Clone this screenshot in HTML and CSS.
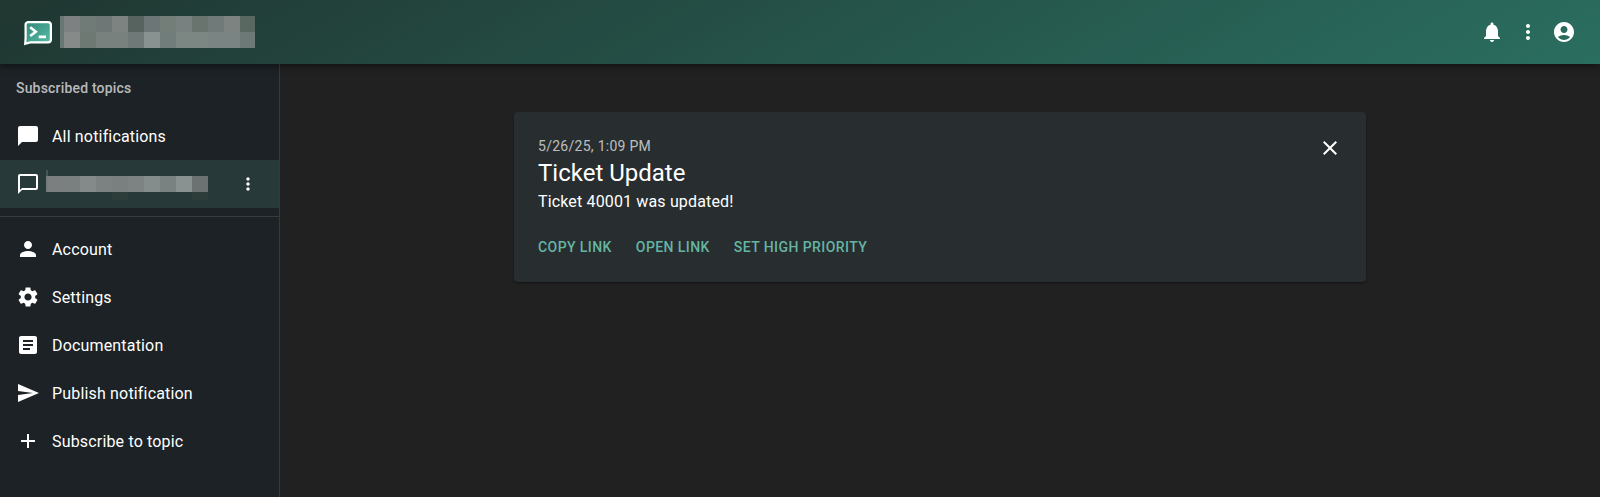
FILE: index.html
```html
<!DOCTYPE html>
<html lang="en">
<head>
<meta charset="utf-8">
<title>ntfy</title>
<link rel="stylesheet" href="styles.css">
</head>
<body>
<header class="topbar">
  <svg class="logo" viewBox="0 0 28 28">
    <defs><linearGradient id="g" x1="0" y1="0" x2="1" y2="1"><stop offset="0" stop-color="#348878"/><stop offset="1" stop-color="#56bda8"/></linearGradient></defs>
    <path d="M4 3.100h20a2.900 2.900 0 0 1 2.900 2.900v14.500a2.900 2.900 0 0 1-2.900 2.900H6.200L1.200 24.800 1.600 19V6A2.600 2.600 0 0 1 4 3.100z" fill="url(#g)" stroke="#fff" stroke-width="2.200"/>
    <path d="M6.200 8.300l5.600 4.400-5.600 4.400M14.700 17.900h7.300" fill="none" stroke="#fff" stroke-width="2.600"/>
  </svg>
  <svg class="redacted-title" viewBox="0 0 195 32" shape-rendering="crispEdges">
    <path fill="#697773" d="M0 0h4v32H0z"/>
    <path fill="#7d8181" d="M4 0h16v16H4z"/><path fill="#707b77" d="M20 0h16v16H20z"/><path fill="#6e7676" d="M36 0h16v16H36z"/><path fill="#7d8380" d="M52 0h16v16H52z"/><path fill="#56635f" d="M68 0h16v16H68z"/><path fill="#6c7676" d="M84 0h16v16H84z"/><path fill="#747e79" d="M100 0h16v16h-16z"/><path fill="#78817f" d="M116 0h16v16h-16z"/><path fill="#69746f" d="M132 0h16v16h-16z"/><path fill="#707b79" d="M148 0h16v16h-16z"/><path fill="#7c8380" d="M164 0h16v16h-16z"/><path fill="#596962" d="M180 0h15v16h-15z"/>
    <path fill="#868b8a" d="M4 16h16v16H4z"/><path fill="#6e7974" d="M20 16h16v16H20z"/><path fill="#78817e" d="M36 16h32v16H36z"/><path fill="#6e7978" d="M84 16H68v16h16z"/><path fill="#889290" d="M84 16h16v16H84z"/><path fill="#717d7b" d="M100 16h16v16h-16z"/><path fill="#7c8683" d="M116 16h32v16h-32z"/><path fill="#7a8482" d="M148 16h32v16h-32z"/><path fill="#6c7976" d="M180 16h15v16h-15z"/>
  </svg>
  <div class="topbar-actions">
    <svg class="icon" viewBox="0 0 24 24"><path d="M12 22c1.100 0 2-.9 2-2h-4c0 1.100.89 2 2 2zm6-6v-5c0-3.070-1.640-5.640-4.500-6.320V4c0-.83-.67-1.500-1.500-1.500s-1.500.67-1.500 1.500v.68C7.630 5.360 6 7.920 6 11v5l-2 2v1h16v-1l-2-2z"/></svg>
    <svg class="icon" viewBox="0 0 24 24"><path d="M12 8c1.100 0 2-.9 2-2s-.9-2-2-2-2 .9-2 2 .9 2 2 2zm0 2c-1.100 0-2 .9-2 2s.9 2 2 2 2-.9 2-2-.9-2-2-2zm0 6c-1.100 0-2 .9-2 2s.9 2 2 2 2-.9 2-2-.9-2-2-2z"/></svg>
    <svg class="icon" viewBox="0 0 24 24"><path d="M12 2C6.480 2 2 6.480 2 12s4.480 10 10 10 10-4.480 10-10S17.520 2 12 2zm0 4c1.930 0 3.500 1.570 3.500 3.500S13.930 13 12 13s-3.500-1.570-3.500-3.500S10.070 6 12 6zm0 14c-2.030 0-4.430-.82-6.140-2.880C7.550 15.800 9.680 15 12 15s4.450.8 6.140 2.120C16.430 19.180 14.030 20 12 20z"/></svg>
  </div>
</header>
<div class="shell">
  <nav class="sidebar">
    <div class="subheader">Subscribed topics</div>
    <a class="item"><svg class="icon" viewBox="0 0 24 24"><path d="M20 2H4c-1.100 0-1.990.9-1.990 2L2 22l4-4h14c1.100 0 2-.9 2-2V4c0-1.100-.9-2-2-2z"/></svg><span class="label">All notifications</span></a>
    <a class="item selected"><svg class="icon" viewBox="0 0 24 24"><path d="M20 2H4c-1.100 0-2 .9-2 2v18l4-4h14c1.100 0 2-.9 2-2V4c0-1.100-.9-2-2-2zm0 14H6l-2 2V4h16v12z"/></svg>
      <svg class="redacted-topic" viewBox="0 0 162 30" shape-rendering="crispEdges">
        <path fill="#465452" d="M0 0h2v6H0z"/><path fill="#737d7b" d="M0 6h2v16H0z"/><path fill="#7b7f7f" d="M2 6h16v16H2z"/><path fill="#7a8080" d="M18 6h16v16H18z"/><path fill="#848a8a" d="M34 6h16v16H34z"/><path fill="#7c8282" d="M50 6h16v16H50z"/><path fill="#7a7f7f" d="M66 6h16v16H66z"/><path fill="#7d8383" d="M82 6h16v16H82z"/><path fill="#858c8c" d="M98 6h16v16H98z"/><path fill="#7a8181" d="M114 6h16v16h-16z"/><path fill="#8a9191" d="M130 6h16v16h-16z"/><path fill="#6c7272" d="M146 6h16v16h-16z"/><path fill="#2d3d3a" d="M66 22h16v8H66zM146 22h16v8h-16z"/>
      </svg>
      <svg class="icon more" viewBox="0 0 24 24"><path d="M12 8c1.100 0 2-.9 2-2s-.9-2-2-2-2 .9-2 2 .9 2 2 2zm0 2c-1.100 0-2 .9-2 2s.9 2 2 2 2-.9 2-2-.9-2-2-2zm0 6c-1.100 0-2 .9-2 2s.9 2 2 2 2-.9 2-2-.9-2-2-2z"/></svg></a>
    <hr class="divider">
    <a class="item"><svg class="icon" viewBox="0 0 24 24"><path d="M12 12c2.210 0 4-1.790 4-4s-1.790-4-4-4-4 1.790-4 4 1.790 4 4 4zm0 2c-2.670 0-8 1.340-8 4v2h16v-2c0-2.660-5.330-4-8-4z"/></svg><span class="label">Account</span></a>
    <a class="item"><svg class="icon" viewBox="0 0 24 24"><path d="M19.140 12.940c.04-.3.060-.61.060-.94 0-.32-.02-.64-.07-.94l2.030-1.580c.18-.14.230-.41.120-.61l-1.920-3.320c-.12-.22-.37-.29-.59-.22l-2.390.96c-.5-.38-1.030-.7-1.620-.94l-.36-2.540c-.04-.24-.24-.41-.48-.41h-3.840c-.24 0-.43.17-.47.41l-.36 2.540c-.59.24-1.130.57-1.620.94l-2.390-.96c-.22-.08-.47 0-.59.22L2.740 8.870c-.12.210-.08.470.12.610l2.030 1.580c-.05.3-.09.630-.09.940s.02.640.07.940l-2.030 1.580c-.18.140-.23.410-.12.610l1.920 3.320c.12.220.37.290.59.220l2.390-.96c.5.380 1.030.7 1.620.94l.36 2.540c.05.240.24.410.48.410h3.840c.24 0 .44-.17.470-.41l.36-2.540c.59-.24 1.130-.56 1.620-.94l2.390.96c.22.080.47 0 .59-.22l1.920-3.320c.12-.22.070-.47-.12-.61l-2.010-1.580zM12 15.600c-1.980 0-3.600-1.620-3.600-3.600s1.620-3.600 3.600-3.600 3.600 1.620 3.600 3.600-1.620 3.600-3.600 3.600z"/></svg><span class="label">Settings</span></a>
    <a class="item"><svg class="icon" viewBox="0 0 24 24"><path d="M19 3H5c-1.100 0-2 .9-2 2v14c0 1.100.9 2 2 2h14c1.100 0 2-.9 2-2V5c0-1.100-.9-2-2-2zm-5 14H7v-2h7v2zm3-4H7v-2h10v2zm0-4H7V7h10v2z"/></svg><span class="label">Documentation</span></a>
    <a class="item"><svg class="icon" viewBox="0 0 24 24"><path d="M2.010 21 23 12 2.010 3 2 10l15 2-15 2z"/></svg><span class="label">Publish notification</span></a>
    <a class="item"><svg class="icon" viewBox="0 0 24 24"><path d="M19 13h-6v6h-2v-6H5v-2h6V5h2v6h6v2z"/></svg><span class="label">Subscribe to topic</span></a>
  </nav>
  <main class="content">
    <article class="card">
      <div class="card-head">
        <div class="card-text">
          <p class="date">5/26/25, 1:09 PM</p>
          <h2 class="title">Ticket Update</h2>
          <p class="message">Ticket 40001 was updated!</p>
        </div>
        <svg class="icon" viewBox="0 0 24 24"><path d="M19 6.410 17.590 5 12 10.590 6.410 5 5 6.410 10.590 12 5 17.590 6.410 19 12 13.410 17.590 19 19 17.590 13.410 12z"/></svg>
      </div>
      <div class="actions"><button class="action">Copy link</button><button class="action">Open link</button><button class="action">Set high priority</button></div>
    </article>
  </main>
</div>
</body>
</html>
```
FILE: styles.css
```css
* { box-sizing: border-box; }
body { margin: 0; height: 497px; overflow: hidden; display: flex; flex-direction: column; background: #212121; color: #fff; font: 400 16px/24px Roboto, sans-serif; letter-spacing: 0.15px; }
.icon { width: 24px; height: 24px; fill: #fff; flex: none; display: block; }
.topbar { position: relative; z-index: 1; height: 64px; flex: none; display: flex; align-items: center; padding: 0 24px; background: linear-gradient(150deg, #203631 0%, #2a6e60 100%); box-shadow: 0 2px 4px -1px rgba(0,0,0,.2), 0 4px 5px rgba(0,0,0,.14), 0 1px 10px rgba(0,0,0,.12); }
.logo { width: 28px; height: 28px; margin-top: 2px; }
.redacted-title { width: 195px; height: 32px; margin-left: 8px; }
.topbar-actions { display: flex; gap: 12px; margin-left: auto; }
.shell { flex: 1; display: flex; min-height: 0; }
.sidebar { width: 280px; flex: none; background: #1c2225; border-right: 1px solid #37393b; }
.subheader { height: 48px; padding: 0 16px; font-size: 14px; font-weight: 500; line-height: 48px; letter-spacing: .18px; color: rgba(255,255,255,.7); }
.item { height: 48px; display: flex; align-items: center; gap: 12px; padding: 0 16px; }
.item.selected { background: #273938; }
.label { padding-top: 2px; letter-spacing: .17px; }
.redacted-topic { width: 162px; height: 30px; margin: 2px 0 0 -6px; }
.more { width: 20px; height: 20px; margin: 0 5px 0 auto; }
.divider { border: 0; height: 1px; margin: 8px 0; background: #373c3f; }
.content { flex: 1; padding: 48px 0; display: flex; flex-direction: column; align-items: center; }
.card { width: 852px; height: 170px; padding: 24px; border-radius: 4px; background: #282d30; box-shadow: 0 2px 1px -1px rgba(0,0,0,.2), 0 1px 1px rgba(0,0,0,.14), 0 1px 3px rgba(0,0,0,.12); }
.card-head { display: flex; justify-content: space-between; }
.date { margin: 0; font-size: 14px; line-height: 20px; letter-spacing: .28px; color: rgba(255,255,255,.7); }
.title { margin: 1px 0 0; font-size: 24px; line-height: 32px; font-weight: 400; letter-spacing: 0; }
.message { margin: 1px 0 0; }
.actions { display: flex; gap: 24px; margin-top: 21px; }
.action { border: 0; padding: 0; background: none; color: #65b5a3; font: 500 14px/24px Roboto, sans-serif; letter-spacing: .42px; text-transform: uppercase; }
```
